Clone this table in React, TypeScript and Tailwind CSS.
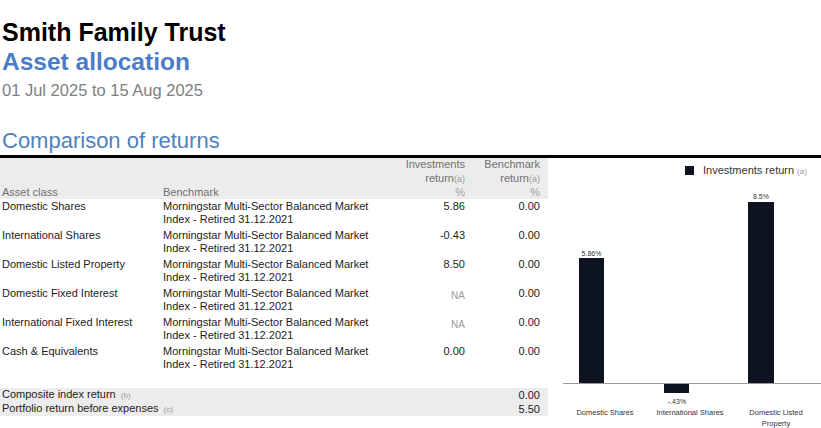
const ROWS: { asset: string; inv: string; bench: string }[] = [
  { asset: 'Domestic Shares', inv: '5.86', bench: '0.00' },
  { asset: 'International Shares', inv: '-0.43', bench: '0.00' },
  { asset: 'Domestic Listed Property', inv: '8.50', bench: '0.00' },
  { asset: 'Domestic Fixed Interest', inv: 'NA', bench: '0.00' },
  { asset: 'International Fixed Interest', inv: 'NA', bench: '0.00' },
  { asset: 'Cash & Equivalents', inv: '0.00', bench: '0.00' },
];

const GRID = 'grid grid-cols-[161px_237px_65px_75px] pl-[2px] pr-[8px]';

function Note({ children }: { children: string }): React.JSX.Element {
  return <span className="ml-[2px] text-[8px] text-[#9a9a9a]">{children}</span>;
}

function ReturnsTable(): React.JSX.Element {
  return (
    <div className="w-[548px] shrink-0 text-[11px] leading-[13px] text-[#1c1c1c]">
      <div className={`${GRID} h-[41px] items-end bg-[#ececec] pb-[1px] leading-[13.5px] text-[#707070]`}>
        <span>Asset class</span>
        <span>Benchmark</span>
        <span className="text-right">
          Investments
          <br />
          return<span className="text-[9px] text-[#9a9a9a]">(a)</span>
          <br />
          <span className="text-[#a0a0a0]">%</span>
        </span>
        <span className="text-right">
          Benchmark
          <br />
          return<span className="text-[9px] text-[#9a9a9a]">(a)</span>
          <br />
          <span className="text-[#a0a0a0]">%</span>
        </span>
      </div>

      {ROWS.map((row) => (
        <div key={row.asset} className={`${GRID} h-[29px] pt-px`}>
          <span>{row.asset}</span>
          <span>
            Morningstar Multi-Sector Balanced Market
            <br />
            Index - Retired 31.12.2021
          </span>
          {row.inv === 'NA' ? (
            <span className="pt-[2px] text-right text-[10px] text-[#9a9a9a]">NA</span>
          ) : (
            <span className="text-right">{row.inv}</span>
          )}
          <span className="text-right">{row.bench}</span>
        </div>
      ))}

      <div className="mt-[15px] bg-[#ececec]">
        <div className="flex h-[14px] items-center justify-between pr-[8px] pl-[2px]">
          <span>
            Composite index return <Note>(b)</Note>
          </span>
          <span>0.00</span>
        </div>
        <div className="flex h-[14px] items-center justify-between pr-[8px] pl-[2px]">
          <span>
            Portfolio return before expenses <Note>(c)</Note>
          </span>
          <span>5.50</span>
        </div>
      </div>
    </div>
  );
}

function ReturnsChart(): React.JSX.Element {
  const bar = '#0e1321';
  const small = { fontFamily: '"Liberation Sans", Arial, sans-serif' };
  return (
    <svg width={273} height={270} viewBox="548 158 273 270" className="block shrink-0">
      <rect x={685} y={166} width={9} height={9} fill={bar} />
      <text x={703} y={174} fontSize={11} fill="#333" style={small}>
        Investments return
        <tspan fontSize={8} fill="#999" dx={3}>
          (a)
        </tspan>
      </text>

      <line x1={563} x2={821} y1={383.5} y2={383.5} stroke="#9a9a9a" strokeWidth={1} />

      <rect x={579} y={258} width={25} height={125} fill={bar} />
      <rect x={664} y={384} width={25} height={9} fill={bar} />
      <rect x={748} y={202} width={26} height={181} fill={bar} />

      <g fontSize={7} fill="#333" textAnchor="middle" style={small}>
        <text x={591.5} y={256}>5.86%</text>
        <text x={761} y={199}>8.5%</text>
        <text x={677} y={404}>-.43%</text>
      </g>

      <g fontSize={7.5} fill="#333" textAnchor="middle" style={small}>
        <text x={605} y={415}>Domestic Shares</text>
        <text x={690} y={415}>International Shares</text>
        <text x={776} y={415}>Domestic Listed</text>
        <text x={776} y={426}>Property</text>
      </g>
    </svg>
  );
}

export default function App(): React.JSX.Element {
  return (
    <div className="h-[428px] w-[821px] overflow-hidden bg-white font-['Liberation_Sans',Arial,sans-serif]">
      <div className="pt-[17px] pl-[2px]">
        <h1 className="text-[25px] leading-[30px] font-bold text-black">Smith Family Trust</h1>
        <h2 className="text-[24.5px] leading-[30px] font-bold text-[#4a7dc9]">Asset allocation</h2>
        <p className="mt-[3px] text-[16.5px] leading-[20px] text-[#808080]">01 Jul 2025 to 15 Aug 2025</p>
        <h3 className="mt-[28px] text-[22px] leading-[26px] text-[#5082c0]">Comparison of returns</h3>
      </div>

      <div className="mt-[1px] h-[3px] bg-black" />

      <div className="flex">
        <ReturnsTable />
        <ReturnsChart />
      </div>
    </div>
  );
}
